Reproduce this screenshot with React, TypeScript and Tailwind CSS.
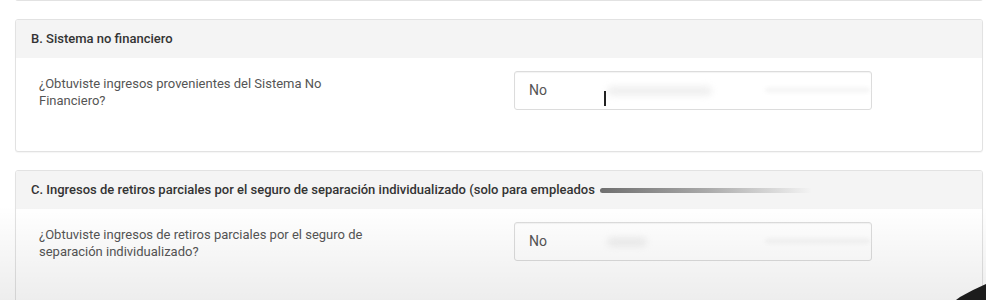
interface QuestionCardProps {
    title: React.ReactNode;
    question: string;
    answer: string;
    caret?: boolean;
    smudgeWide?: boolean;
    tall?: boolean;
}

function AnswerBox({ answer, caret, smudgeWide }: { answer: string; caret?: boolean; smudgeWide?: boolean }) {
    return (
        <div className="relative flex h-[39px] w-[358px] items-center rounded-[3px] border border-[#dcdcdc] bg-white pl-[14px] text-[14px] text-[#555] shadow-[inset_0_1px_1px_rgba(0,0,0,0.05)]">
            {answer}
            {/* blurred video smudges */}
            <span
                className={`pointer-events-none absolute left-[92px] top-[14px] h-[10px] rounded-full bg-[#f0f0f0] blur-[3px] ${
                    smudgeWide ? 'w-[105px]' : 'w-[40px]'
                }`}
            />
            <span className="pointer-events-none absolute left-[250px] top-[16px] h-[4px] w-[105px] rounded-full bg-[#f2f2f2] blur-[2px]" />
            {caret && <span className="absolute left-[89px] top-[19px] h-[15px] w-[1.5px] bg-[#222]" />}
        </div>
    );
}

function QuestionCard({ title, question, answer, caret, smudgeWide, tall }: QuestionCardProps) {
    return (
        <div className="overflow-hidden rounded-[3px] border border-[#e2e2e2] bg-white shadow-[0_1px_1px_rgba(0,0,0,0.04)]">
            <div className="flex h-[38px] items-center bg-[#f4f4f4] px-[15px] text-[13px] font-medium text-[#333]">
                {title}
            </div>
            <div className={`flex items-start pl-[23px] pt-[13px] ${tall ? 'pb-[70px]' : 'pb-[41px]'}`}>
                <p className="mt-[4px] w-[345px] text-[13px] leading-[17px] text-[#555]">{question}</p>
                <div className="ml-[130px]">
                    <AnswerBox answer={answer} caret={caret} smudgeWide={smudgeWide} />
                </div>
            </div>
        </div>
    );
}

export default function App() {
    return (
        <div
            className="relative h-[300px] w-[986px] overflow-hidden bg-white"
            style={{ fontFamily: 'Roboto, "Liberation Sans", Arial, sans-serif' }}
        >
            <div className="flex flex-col gap-[18px] pl-[15px] pr-[3px]">
                <div className="-mt-[2px] h-[3px] rounded-b-[3px] border-x border-b border-[#e2e2e2]" />
                <QuestionCard
                    title="B. Sistema no financiero"
                    question="¿Obtuviste ingresos provenientes del Sistema No Financiero?"
                    answer="No"
                    caret
                    smudgeWide
                />
                <QuestionCard
                    title={
                        <span className="flex items-center whitespace-nowrap">
                            C. Ingresos de retiros parciales por el seguro de separación individualizado (solo para empleados
                            <span className="ml-[5px] h-[5px] w-[212px] rounded-full bg-gradient-to-r from-[#6f6f6f] via-[#a9a9a9] to-transparent" />
                        </span>
                    }
                    question="¿Obtuviste ingresos de retiros parciales por el seguro de separación individualizado?"
                    answer="No"
                    tall
                />
            </div>
            {/* bottom vignette from the recording */}
            <div className="pointer-events-none absolute inset-x-0 bottom-0 h-[95px] bg-gradient-to-b from-transparent to-black/[0.07]" />
            <svg className="pointer-events-none absolute bottom-0 right-0" width="30" height="16" viewBox="0 0 30 16">
                <path d="M30 0 L30 16 L0 16 L4 13 Q16 6 30 0 Z" fill="#1c1c1c" />
            </svg>
        </div>
    );
}
